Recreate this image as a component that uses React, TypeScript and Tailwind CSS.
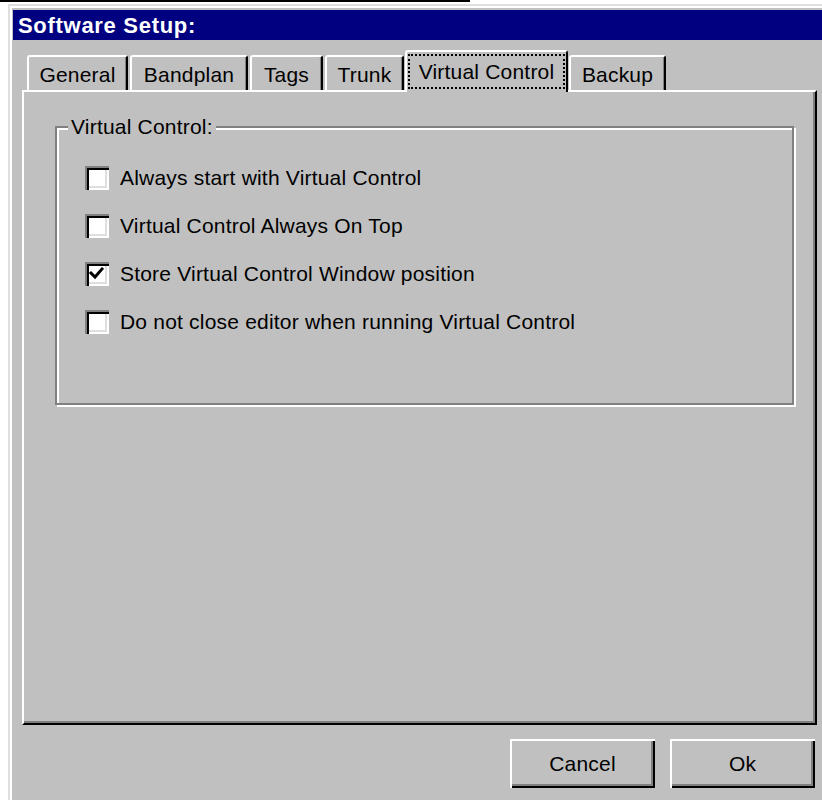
const tabs = [
  { label: 'General', width: 'w-[101px]', active: false },
  { label: 'Bandplan', width: 'w-[118px]', active: false },
  { label: 'Tags', width: 'w-[73px]', active: false },
  { label: 'Trunk', width: 'w-[79px]', active: false },
  { label: 'Virtual Control', width: 'w-[163px]', active: true },
  { label: 'Backup', width: 'w-[97px]', active: false },
]

const options = [
  { label: 'Always start with Virtual Control', checked: false },
  { label: 'Virtual Control Always On Top', checked: false },
  { label: 'Store Virtual Control Window position', checked: true },
  { label: 'Do not close editor when running Virtual Control', checked: false },
]

function Checkbox({ checked }: { checked: boolean }) {
  return (
    <span className="relative block w-[24px] h-[24px] shrink-0 bg-white shadow-[inset_2px_2px_0_#808080,inset_4px_4px_0_#000,inset_-2px_-2px_0_#fff,inset_-4px_-4px_0_#dfdfdf]">
      {checked && (
        <svg viewBox="0 0 24 24" className="absolute inset-0 w-full h-full">
          <polyline points="6,11 10,15 17,7" fill="none" stroke="#000" strokeWidth="3" strokeLinecap="square" />
        </svg>
      )}
    </span>
  )
}

function Tab({ label, width, active }: { label: string; width: string; active: boolean }) {
  if (active) {
    return (
      <div className={`relative z-10 -mb-[2px] -ml-[1px] -mr-[1px] h-[42px] ${width} flex items-start pt-[2px] px-[1px] bg-[#c0c0c0] border-t-2 border-l-2 border-white border-r-2 border-r-black rounded-t-[3px] whitespace-nowrap`}>
        <span className="flex-1 text-center border-2 border-dotted border-black leading-[31px]">{label}</span>
      </div>
    )
  }
  return (
    <div className={`h-[35px] ${width} flex items-center justify-center pt-[2px] border-t-2 border-l-2 border-white border-r-2 border-r-black rounded-t-[3px] shadow-[inset_-1px_0_0_#808080] whitespace-nowrap`}>
      {label}
    </div>
  )
}

export default function App() {
  return (
    <div className="w-[822px] h-[800px] bg-white overflow-hidden text-[21px] tracking-[0.2px] text-black" style={{ fontFamily: '"Liberation Sans", Arial, sans-serif' }}>
      <div className="h-[2px] w-[470px] bg-black" />
      <div className="mt-[2px] ml-[8px] h-[796px] bg-[#c0c0c0] border-t-2 border-l-2 border-[#dfdfdf]">
        <div className="h-full border-t-2 border-l-2 border-white pt-[2px] pl-[1px]">
          {/* title bar */}
          <div className="h-[30px] bg-[#000080] flex items-center pl-[5px] text-white font-bold text-[22px] tracking-[0.7px]">
            Software Setup:
          </div>

          <div className="pl-[9px] pt-[10px]">
            {/* tab strip */}
            <div className="flex items-end h-[40px] pl-[5px] gap-[2px]">
              {tabs.map((t) => (
                <Tab key={t.label} {...t} />
              ))}
            </div>

            {/* tab page */}
            <div className="w-[795px] h-[635px] border-t-2 border-l-2 border-white border-r-2 border-b-2 border-r-black border-b-black shadow-[inset_-2px_-2px_0_#808080] pl-[31px] pt-[34px]">
              <div className="relative w-[739px] h-[279px] border-2 border-[#808080] shadow-[inset_2px_2px_0_#fff,2px_2px_0_#fff] pl-[28px] pt-[26px]">
                <span className="absolute -top-[13px] left-[11px] px-[3px] bg-[#c0c0c0] leading-[24px]">Virtual Control:</span>
                {options.map((o) => (
                  <div key={o.label} className="h-[48px] flex items-center gap-[11px]">
                    <Checkbox checked={o.checked} />
                    <span>{o.label}</span>
                  </div>
                ))}
              </div>
            </div>

            {/* dialog buttons */}
            <div className="w-[795px] flex justify-end gap-[15px] pt-[14px] pr-[2px]">
              {['Cancel', 'Ok'].map((b) => (
                <button
                  key={b}
                  className="w-[145px] h-[49px] bg-[#c0c0c0] shadow-[inset_2px_2px_0_#fff,inset_-2px_-2px_0_#000,inset_-4px_-4px_0_#808080]"
                >
                  {b}
                </button>
              ))}
            </div>
          </div>
        </div>
      </div>
    </div>
  )
}
